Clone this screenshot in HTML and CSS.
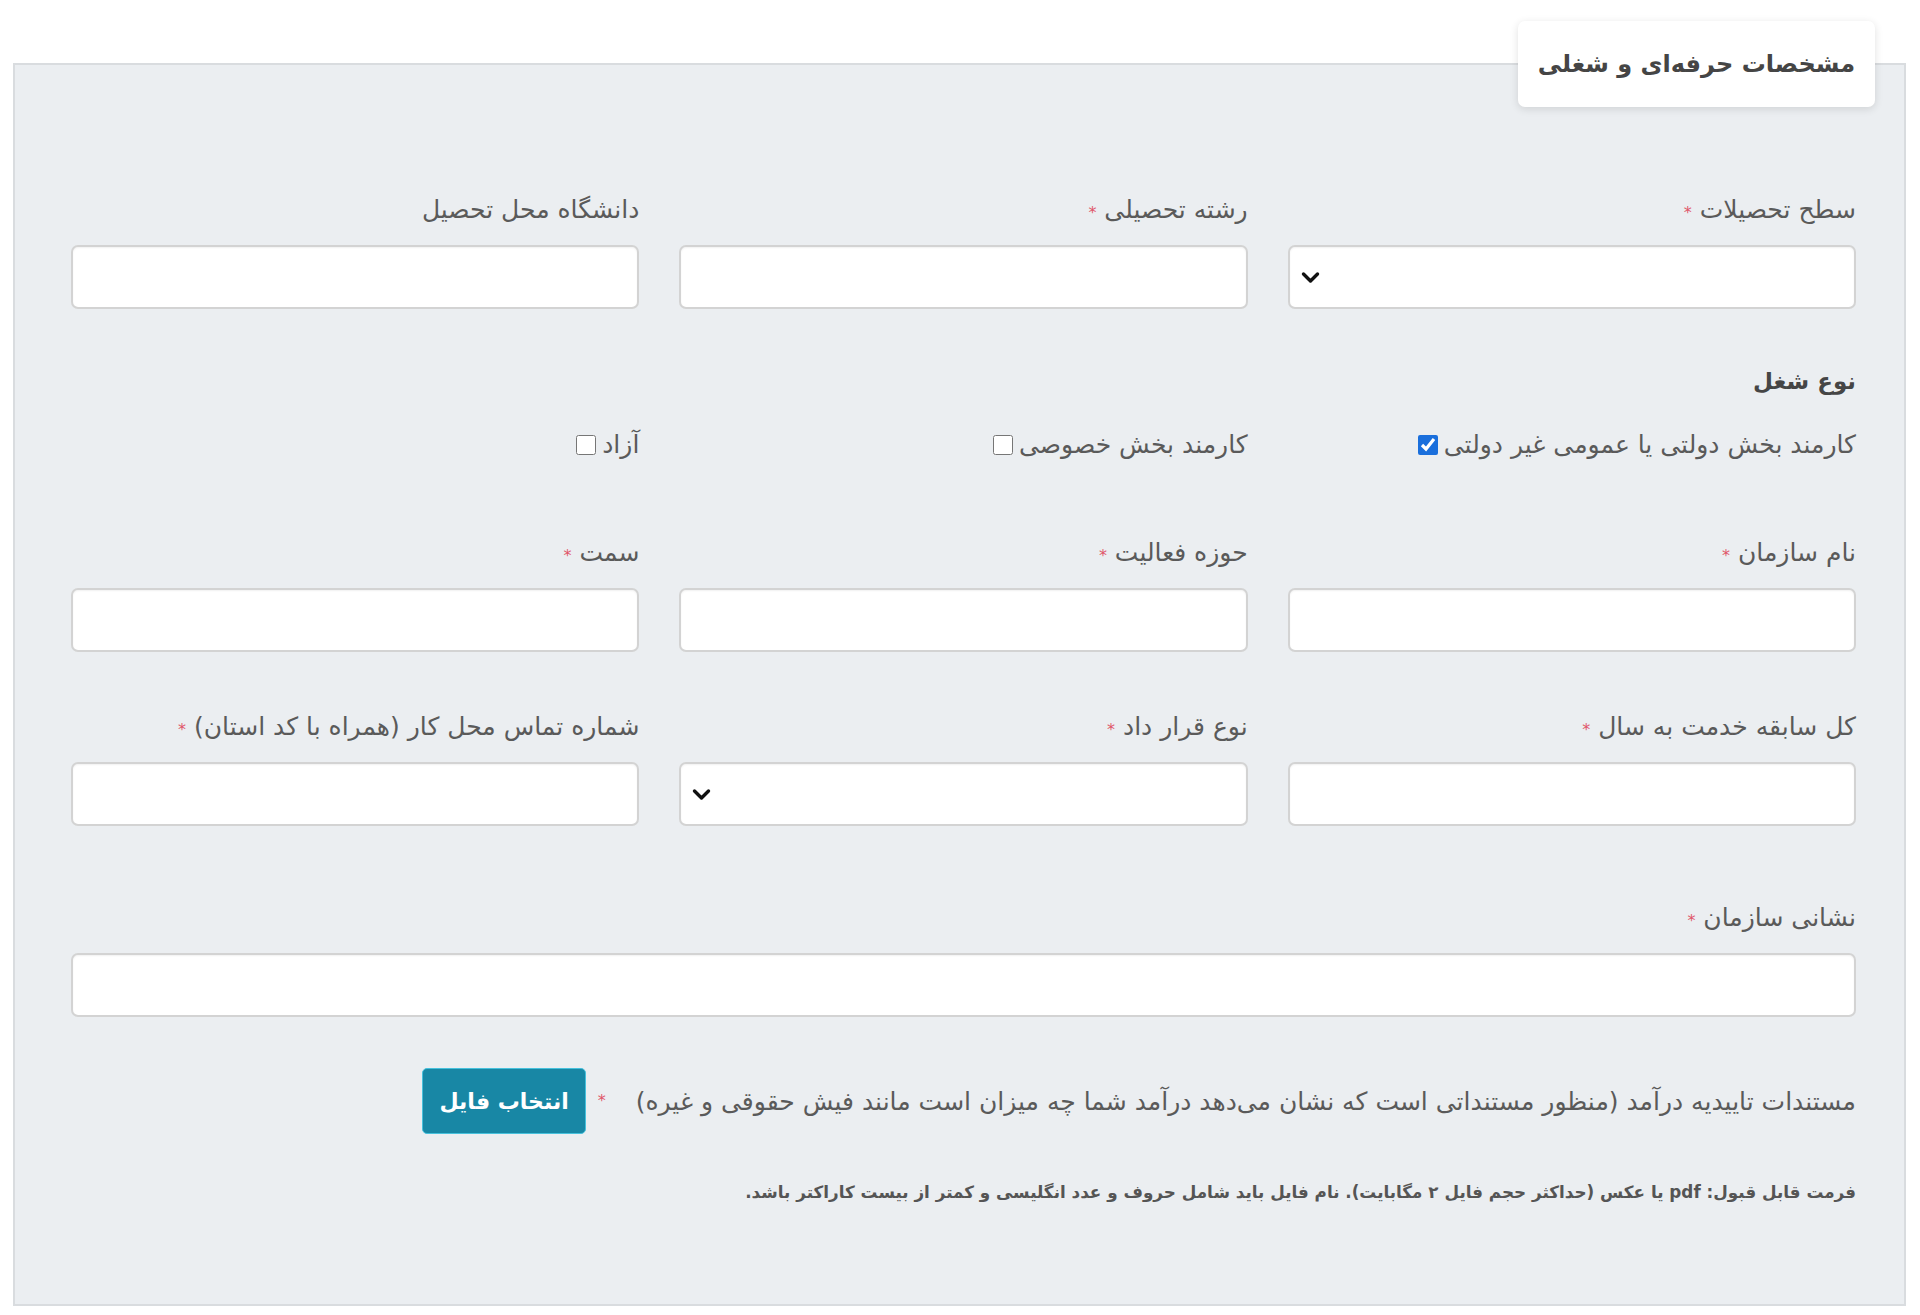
FILE: index.html
```html
<!DOCTYPE html>
<html lang="fa" dir="rtl">
<head>
  <meta charset="UTF-8" />
  <meta name="viewport" content="width=device-width, initial-scale=1" />
  <title>مشخصات حرفه‌ای و شغلی</title>
  <link rel="stylesheet" href="styles.css">
</head>
<body>

  <fieldset class="panel">
    <legend class="panel-title">مشخصات حرفه‌ای و شغلی</legend>

    <div class="row">
      <div class="field">
        <label class="label">سطح تحصیلات <span class="req">*</span></label>
        <div class="select">
          <svg width="19" height="13" viewBox="0 0 19 13"><path d="M2.5 3l7 7 7-7" fill="none" stroke="#111" stroke-width="3.4" stroke-linecap="round" stroke-linejoin="round"/></svg>
        </div>
      </div>
      <div class="field">
        <label class="label">رشته تحصیلی <span class="req">*</span></label>
        <input class="input" type="text" />
      </div>
      <div class="field">
        <label class="label">دانشگاه محل تحصیل</label>
        <input class="input" type="text" />
      </div>
    </div>

    <h4 class="group-title">نوع شغل</h4>
    <div class="row row-checks">
      <label class="check"><span>کارمند بخش دولتی یا عمومی غیر دولتی</span><input type="checkbox" checked /></label>
      <label class="check"><span>کارمند بخش خصوصی</span><input type="checkbox" /></label>
      <label class="check"><span>آزاد</span><input type="checkbox" /></label>
    </div>

    <div class="row row-gap-lg">
      <div class="field">
        <label class="label">نام سازمان <span class="req">*</span></label>
        <input class="input" type="text" />
      </div>
      <div class="field">
        <label class="label">حوزه فعالیت <span class="req">*</span></label>
        <input class="input" type="text" />
      </div>
      <div class="field">
        <label class="label">سمت <span class="req">*</span></label>
        <input class="input" type="text" />
      </div>
    </div>

    <div class="row row-gap">
      <div class="field">
        <label class="label">کل سابقه خدمت به سال <span class="req">*</span></label>
        <input class="input" type="text" />
      </div>
      <div class="field">
        <label class="label">نوع قرار داد <span class="req">*</span></label>
        <div class="select">
          <svg width="19" height="13" viewBox="0 0 19 13"><path d="M2.5 3l7 7 7-7" fill="none" stroke="#111" stroke-width="3.4" stroke-linecap="round" stroke-linejoin="round"/></svg>
        </div>
      </div>
      <div class="field">
        <label class="label">شماره تماس محل کار (همراه با کد استان) <span class="req">*</span></label>
        <input class="input" type="text" />
      </div>
    </div>

    <div class="field field-wide">
      <label class="label">نشانی سازمان <span class="req">*</span></label>
      <input class="input" type="text" />
    </div>

    <div class="upload">
      <span class="upload-text">مستندات تاییدیه درآمد (منظور مستنداتی است که نشان می‌دهد درآمد شما چه میزان است مانند فیش حقوقی و غیره)</span>
      <span class="req">*</span>
      <button class="btn" type="button">انتخاب فایل</button>
    </div>

    <p class="help">فرمت قابل قبول: pdf یا عکس (حداکثر حجم فایل ۲ مگابایت). نام فایل باید شامل حروف و عدد انگلیسی و کمتر از بیست کاراکتر باشد.</p>
  </fieldset>

</body>
</html>
```

FILE: styles.css
```css
* {
  box-sizing: border-box;
}

body {
  margin: 0;
  background: #fff;
  font-family: "DejaVu Sans", sans-serif;
  color: #555;
}

.panel {
  margin: 21px 14px 7px 13px;
  padding: 88px 48px 100px 56px;
  background: #ebeef1;
  border: 2px solid #d9dcdf;
}

.panel-title {
  margin-right: -19px;
  padding: 0 20px;
  height: 86px;
  line-height: 86px;
  background: #fff;
  border-radius: 7px;
  box-shadow: 0 2px 8px rgba(0,0,0,0.12);
  font-size: 24px;
  font-weight: bold;
  color: #454545;
}

.row {
  display: grid;
  grid-template-columns: repeat(3, 1fr);
  column-gap: 40px;
}

.row-gap {
  margin-top: 60px;
}

.row-gap-lg {
  margin-top: 78px;
}

.field {
  display: flex;
  flex-direction: column;
}

.field-wide {
  margin-top: 77px;
}

.label {
  height: 30px;
  font-size: 25px;
  line-height: 30px;
  margin-bottom: 20px;
  color: #5a5a5a;
  white-space: nowrap;
}

.req {
  color: #e0566a;
  font-size: 16px;
  line-height: 1;
}

.input,
.select {
  height: 64px;
  background: #fff;
  border: 2px solid #d3d3d3;
  border-radius: 7px;
  box-shadow: inset 0 1px 2px rgba(0,0,0,0.06);
}

.select {
  display: flex;
  align-items: center;
  justify-content: flex-end;
  padding-left: 11px;
}

.group-title {
  margin: 57px 0 0;
  font-size: 23px;
  line-height: 30px;
  font-weight: bold;
  color: #454545;
}

.row-checks {
  margin-top: 34px;
}

.check {
  display: flex;
  align-items: center;
  gap: 6px;
  height: 30px;
  font-size: 25px;
  line-height: 30px;
  color: #5a5a5a;
}

.check input {
  width: 20px;
  height: 20px;
  margin: 0;
  accent-color: #1a6fdc;
}

.upload {
  display: flex;
  align-items: center;
  margin-top: 51px;
}

.upload-text {
  font-size: 25px;
  color: #5a5a5a;
}

.upload .req {
  margin: 0 30px 0 12px;
}

.btn {
  height: 66px;
  padding: 0 16px;
  background: #1887a5;
  border: 1px solid #46c1dc;
  border-radius: 5px;
  color: #fff;
  font-family: inherit;
  font-size: 22px;
  font-weight: bold;
}

.help {
  margin: 46px 0 0;
  font-size: 16.8px;
  line-height: 24px;
  font-weight: bold;
  color: #555;
}
```
